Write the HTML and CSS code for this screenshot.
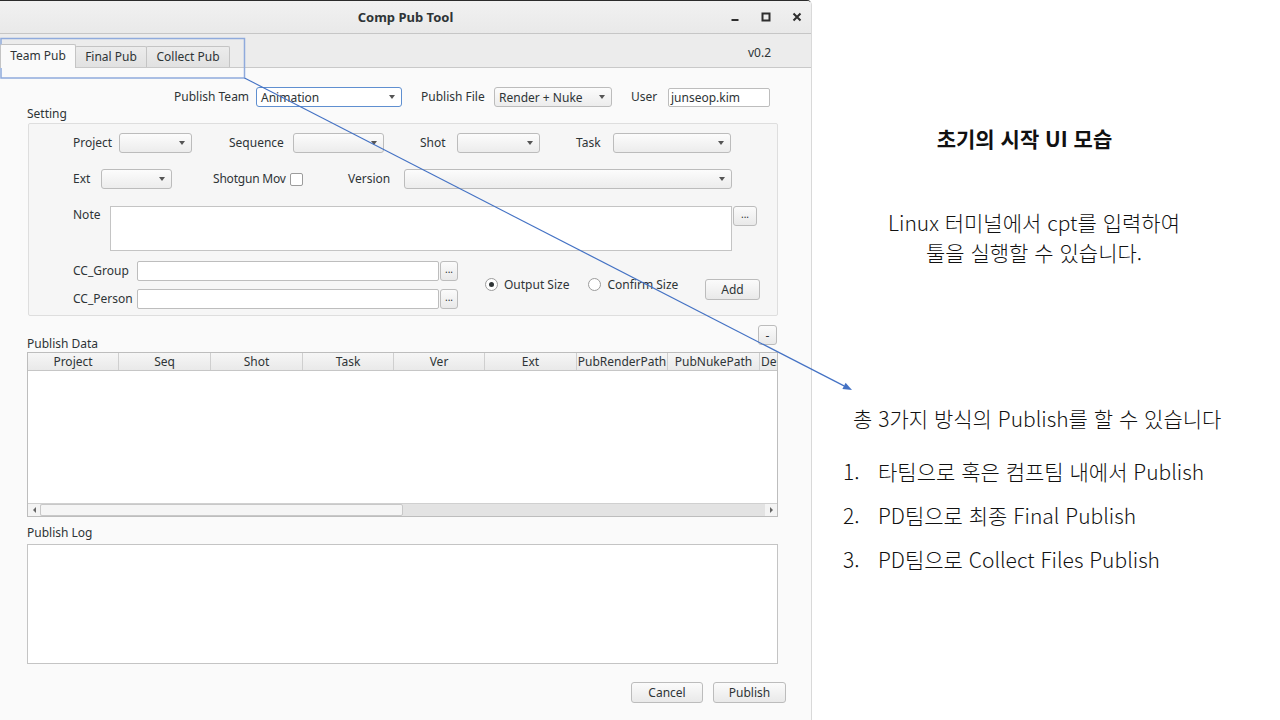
FILE: index.html
```html
<!DOCTYPE html>
<html lang="ko">
<head>
<meta charset="utf-8">
<title>Comp Pub Tool</title>
<link rel="stylesheet" href="styles.css">
</head>
<body>
<div class="page">
  <div class="window">
    <div class="titlebar">
      <div class="tb-spacer"></div>
      <div class="title">Comp Pub Tool</div>
      <div class="wm">
        <span class="wm-btn"><svg width="10" height="10" viewBox="0 0 10 10"><rect x="1.5" y="7" width="7" height="2" fill="#2e2e2e"/></svg></span>
        <span class="wm-btn"><svg width="10" height="10" viewBox="0 0 10 10"><rect x="1.5" y="1.5" width="7" height="7" fill="none" stroke="#2e2e2e" stroke-width="2"/></svg></span>
        <span class="wm-btn"><svg width="10" height="10" viewBox="0 0 10 10"><path d="M1.5 1.5 L8.5 8.5 M8.5 1.5 L1.5 8.5" stroke="#2e2e2e" stroke-width="2" fill="none"/></svg></span>
      </div>
    </div>
    <div class="tabbar">
      <div class="tabs">
        <div class="tab tab-team active">Team Pub</div>
        <div class="tab tab-final">Final Pub</div>
        <div class="tab tab-collect">Collect Pub</div>
      </div>
      <div class="version">v0.2</div>
    </div>
    <div class="content">
      <div class="top-row">
        <span class="lbl w82">Publish Team</span>
        <div class="combo focus w146"><span class="combo-text">Animation</span><i class="caret"></i></div>
        <span class="lbl w73 ml19">Publish File</span>
        <div class="combo w118"><span class="combo-text">Render + Nuke</span><i class="caret"></i></div>
        <span class="lbl w37 ml19">User</span>
        <div class="input w102 h19">junseop.kim</div>
      </div>
      <div class="section-label setting-label">Setting</div>
      <div class="group">
        <div class="grow">
          <span class="lbl w46">Project</span>
          <div class="combo w73"><span class="combo-text"></span><i class="caret"></i></div>
          <span class="lbl w64 ml37">Sequence</span>
          <div class="combo w91"><span class="combo-text"></span><i class="caret"></i></div>
          <span class="lbl w37 ml36">Shot</span>
          <div class="combo w83"><span class="combo-text"></span><i class="caret"></i></div>
          <span class="lbl w37 ml36">Task</span>
          <div class="combo w118"><span class="combo-text"></span><i class="caret"></i></div>
        </div>
        <div class="grow mt16">
          <span class="lbl w28">Ext</span>
          <div class="combo w71"><span class="combo-text"></span><i class="caret"></i></div>
          <span class="lbl w77 ml41 narrow">Shotgun Mov</span>
          <span class="checkbox"></span>
          <span class="lbl w56 ml45">Version</span>
          <div class="combo w328"><span class="combo-text"></span><i class="caret"></i></div>
        </div>
        <div class="grow note-row">
          <span class="lbl w37 lbl-top">Note</span>
          <div class="textarea note-area"></div>
          <div class="btn dots-btn note-dots">...</div>
        </div>
        <div class="cc-block">
          <div class="cc-col">
            <div class="grow">
              <span class="lbl w64">CC_Group</span>
              <div class="input w302 h20"></div>
              <div class="btn dots-btn cc-dots">...</div>
            </div>
            <div class="grow mt8">
              <span class="lbl w64">CC_Person</span>
              <div class="input w302 h20"></div>
              <div class="btn dots-btn cc-dots">...</div>
            </div>
          </div>
          <div class="radios">
            <label class="radio-item"><span class="radio checked"></span><span>Output Size</span></label>
            <label class="radio-item ml19"><span class="radio"></span><span>Confirm Size</span></label>
          </div>
          <div class="btn add-btn">Add</div>
        </div>
      </div>
      <div class="data-head">
        <span class="section-label">Publish Data</span>
        <div class="btn minus-btn">-</div>
      </div>
      <div class="table">
        <div class="thead">
          <div class="th">Project</div>
          <div class="th">Seq</div>
          <div class="th">Shot</div>
          <div class="th">Task</div>
          <div class="th">Ver</div>
          <div class="th">Ext</div>
          <div class="th">PubRenderPath</div>
          <div class="th">PubNukePath</div>
          <div class="th th-last">Description</div>
        </div>
        <div class="tbody"></div>
        <div class="hscroll">
          <div class="sb-arrow"><i class="tri-left"></i></div>
          <div class="sb-thumb"></div>
          <div class="sb-groove"></div>
          <div class="sb-arrow sb-arrow-r"><i class="tri-right"></i></div>
        </div>
      </div>
      <div class="section-label log-label">Publish Log</div>
      <div class="textarea log-area"></div>
      <div class="actions">
        <div class="btn action-btn w72">Cancel</div>
        <div class="btn action-btn w73">Publish</div>
      </div>
    </div>
  </div>
  <div class="slide">
    <h1 class="slide-title">초기의 시작 UI 모습</h1>
    <p class="slide-para">Linux 터미널에서 cpt를 입력하여<br>툴을 실행할 수 있습니다.</p>
    <p class="slide-lead">총 3가지 방식의 Publish를 할 수 있습니다</p>
    <ol class="slide-list">
      <li><span class="num">1.</span><span>타팀으로 혹은 컴프팀 내에서 Publish</span></li>
      <li><span class="num">2.</span><span>PD팀으로 최종 Final Publish</span></li>
      <li><span class="num">3.</span><span>PD팀으로 Collect Files Publish</span></li>
    </ol>
  </div>
</div>
<svg class="overlay" width="1280" height="720" viewBox="0 0 1280 720">
  <rect x="1" y="38.5" width="243.5" height="39.5" fill="none" stroke="#8faadc" stroke-width="1.5"/>
  <line x1="244.5" y1="78" x2="844" y2="385.9" stroke="#4472c4" stroke-width="1.2"/>
  <polygon points="852,390 842.4,389 845.6,382.8" fill="#4472c4"/>
</svg>
</body>
</html>
```

FILE: styles.css
```css
* { box-sizing: border-box; }
html, body { margin: 0; padding: 0; }
body {
  width: 1280px;
  height: 720px;
  background: #ffffff;
  font-family: "Noto Sans", "DejaVu Sans", sans-serif;
  font-size: 12px;
  color: #2e3436;
  position: relative;
  overflow: hidden;
}
.page { display: flex; height: 720px; }

/* window */
.window {
  width: 812px;
  height: 720px;
  display: flex;
  flex-direction: column;
  background: #fafafa;
  border-top: 1px solid #2b2b2b;
  border-right: 1px solid #d9d9d9;
  border-top-right-radius: 5px;
  overflow: hidden;
}
.titlebar {
  height: 33px;
  display: grid;
  grid-template-columns: 1fr auto 1fr;
  align-items: center;
  background: linear-gradient(#f1f1f1, #e9e9e9);
  border-bottom: 1px solid #c6c6c6;
}
.title { font-weight: bold; font-size: 13px; color: #2e3436; }
.wm { display: flex; justify-content: flex-end; }
.wm-btn { width: 31px; height: 20px; display: flex; align-items: center; justify-content: center; }
.wm-btn:last-child { margin-right: -1px; }

.tabbar {
  height: 34px;
  display: flex;
  align-items: flex-end;
  justify-content: space-between;
  background: #ececec;
  border-bottom: 1px solid #c9c9c9;
}
.tabs { display: flex; align-items: flex-end; }
.tab {
  height: 21px;
  border: 1px solid #c4c4c4;
  border-bottom: none;
  background: linear-gradient(#ececec, #e1e1e1);
  text-align: center;
  line-height: 20px;
  color: #2e3436;
  border-radius: 2px 2px 0 0;
}
.tab-team { width: 76px; }
.tab-final { width: 72px; margin-left: -1px; }
.tab-collect { width: 84px; margin-left: -1px; }
.tab.active {
  height: 24px;
  background: #fafafa;
  margin-bottom: -1px;
  line-height: 22px;
  position: relative;
  z-index: 1;
}
.version { align-self: center; margin-right: 40px; padding-top: 4px; }

.content {
  flex: 1;
  display: flex;
  flex-direction: column;
  padding-left: 27px;
}
.top-row {
  display: flex;
  align-items: center;
  height: 20px;
  margin-top: 19px;
  padding-left: 147px;
}
.lbl { line-height: 20px; white-space: nowrap; flex: none; }
.narrow { letter-spacing: -0.2px; }
.lbl-top { align-self: flex-start; line-height: 16px; padding-top: 1px; }
.w28 { width: 28px; }
.w37 { width: 37px; }
.w46 { width: 46px; }
.w56 { width: 56px; }
.w64 { width: 64px; }
.w71 { width: 71px; }
.w72 { width: 72px; }
.w73 { width: 73px; }
.w77 { width: 77px; }
.w82 { width: 82px; }
.w83 { width: 83px; }
.w91 { width: 91px; }
.w102 { width: 102px; }
.w118 { width: 118px; }
.w146 { width: 146px; }
.w302 { width: 302px; }
.w328 { width: 328px; }
.ml19 { margin-left: 19px; }
.ml36 { margin-left: 36px; }
.ml37 { margin-left: 37px; }
.ml41 { margin-left: 41px; }
.ml45 { margin-left: 45px; }
.mt8 { margin-top: 8px; }
.mt16 { margin-top: 16px; }
.h19 { height: 19px; }
.h20 { height: 20px; }

.combo {
  flex: none;
  height: 20px;
  display: flex;
  align-items: center;
  justify-content: space-between;
  padding: 0 6px 0 4px;
  border: 1px solid #bcbcbc;
  border-radius: 3px;
  background: linear-gradient(#fcfcfc, #ececec);
  white-space: nowrap;
}
.combo.focus { background: #ffffff; border-color: #5f8fd0; }
.caret {
  width: 0; height: 0;
  border-left: 3.5px solid transparent;
  border-right: 3.5px solid transparent;
  border-top: 4px solid #555;
}
.input {
  flex: none;
  background: #ffffff;
  border: 1px solid #bdbdbd;
  border-radius: 2px;
  padding: 0 2px;
  line-height: 17px;
}
.textarea { background: #ffffff; border: 1px solid #c4c4c4; }
.checkbox {
  width: 13px; height: 13px;
  flex: none;
  background: #ffffff;
  border: 1px solid #9c9c9c;
  border-radius: 2px;
}
.btn {
  flex: none;
  display: flex;
  align-items: center;
  justify-content: center;
  border: 1px solid #bcbcbc;
  border-radius: 3px;
  background: linear-gradient(#fbfbfb, #e9e9e9);
  color: #2e3436;
}

.section-label { line-height: 16px; }
.setting-label { margin-top: -1px; }
.group {
  margin-top: 1px;
  margin-left: 1px;
  width: 750px;
  height: 193px;
  padding: 9px 0 0 44px;
  background: #f6f6f6;
  border: 1px solid #dedede;
  border-radius: 2px;
}
.grow { display: flex; align-items: center; height: 20px; }
.note-row { height: 45px; margin-top: 17px; align-items: flex-start; }
.note-area { width: 622px; height: 45px; }
.dots-btn { font-size: 10px; line-height: 10px; padding-bottom: 4px; }
.note-dots { width: 24px; height: 20px; margin-left: 1px; }
.cc-dots { width: 18px; height: 20px; margin-left: 1px; }

.cc-block { display: flex; align-items: center; margin-top: 10px; margin-right: 17px; }
.cc-col { display: flex; flex-direction: column; }
.radios { display: flex; align-items: center; margin-left: 27px; margin-top: -2px; }
.radio-item { display: flex; align-items: center; gap: 6px; white-space: nowrap; }
.radio {
  width: 13px; height: 13px;
  border-radius: 50%;
  border: 1px solid #9c9c9c;
  background: #ffffff;
  display: flex; align-items: center; justify-content: center;
}
.radio.checked::after {
  content: "";
  width: 5px; height: 5px;
  border-radius: 50%;
  background: #2e3436;
}
.add-btn { width: 55px; height: 21px; margin-left: auto; margin-top: 8px; }

.data-head {
  display: flex;
  justify-content: space-between;
  width: 751px;
  height: 27px;
  margin-top: 9px;
}
.data-head .section-label { align-self: flex-end; }
.minus-btn { width: 19px; height: 20px; margin-right: 1px; font-size: 12px; }

.table {
  width: 751px;
  height: 165px;
  border: 1px solid #bdbdbd;
  display: flex;
  flex-direction: column;
  background: #ffffff;
}
.thead {
  height: 18px;
  display: grid;
  grid-template-columns: 91px 92px 92px 91px 91px 92px 91px 92px 1fr;
  background: linear-gradient(#f6f6f6, #e9e9e9);
  border-bottom: 1px solid #c6c6c6;
  overflow: hidden;
}
.th {
  text-align: center;
  line-height: 17px;
  border-right: 1px solid #cfcfcf;
  white-space: nowrap;
  overflow: hidden;
}
.th-last { text-align: left; padding-left: 1px; border-right: none; }
.tbody { flex: 1; background: #ffffff; }
.hscroll {
  height: 13px;
  display: flex;
  border-top: 1px solid #d0d0d0;
  background: #e6e6e6;
}
.sb-arrow {
  width: 12px;
  display: flex; align-items: center; justify-content: center;
  background: #f4f4f4;
}
.sb-arrow-r { width: 12px; }
.tri-left { width: 0; height: 0; border-top: 3px solid transparent; border-bottom: 3px solid transparent; border-right: 3px solid #666; }
.tri-right { width: 0; height: 0; border-top: 3px solid transparent; border-bottom: 3px solid transparent; border-left: 3px solid #666; }
.sb-thumb {
  width: 363px;
  background: #f5f5f5;
  border: 1px solid #c8c8c8;
  border-radius: 2px;
}
.sb-groove { flex: 1; background: #e3e3e3; }

.log-label { margin-top: 8px; }
.log-area { width: 751px; height: 120px; margin-top: 3px; }
.actions {
  display: flex;
  justify-content: flex-end;
  gap: 10px;
  width: 759px;
  margin-top: 18px;
}
.action-btn { height: 21px; }

/* slide side */
.slide {
  flex: 1;
  display: flex;
  flex-direction: column;
  padding-top: 124px;
  font-family: "Noto Sans CJK KR", "Noto Sans", sans-serif;
  color: #111111;
}
.slide-title {
  margin: 0;
  width: 425px;
  text-align: center;
  font-size: 21px;
  font-weight: bold;
  line-height: 28px;
}
.slide-para {
  margin: 55px 0 0 0;
  width: 444px;
  text-align: center;
  font-size: 21px;
  font-weight: 300;
  line-height: 30px;
}
.slide-lead {
  margin: 136px 0 0 41px;
  font-size: 21px;
  font-weight: 300;
  line-height: 30px;
  white-space: nowrap;
}
.slide-list {
  list-style: none;
  margin: 16px 0 0 31px;
  padding: 0;
  font-size: 21px;
  font-weight: 300;
}
.slide-list li { display: flex; line-height: 44px; white-space: nowrap; }
.num { width: 35px; }

.overlay {
  position: absolute;
  left: 0;
  top: 0;
  pointer-events: none;
}
```
